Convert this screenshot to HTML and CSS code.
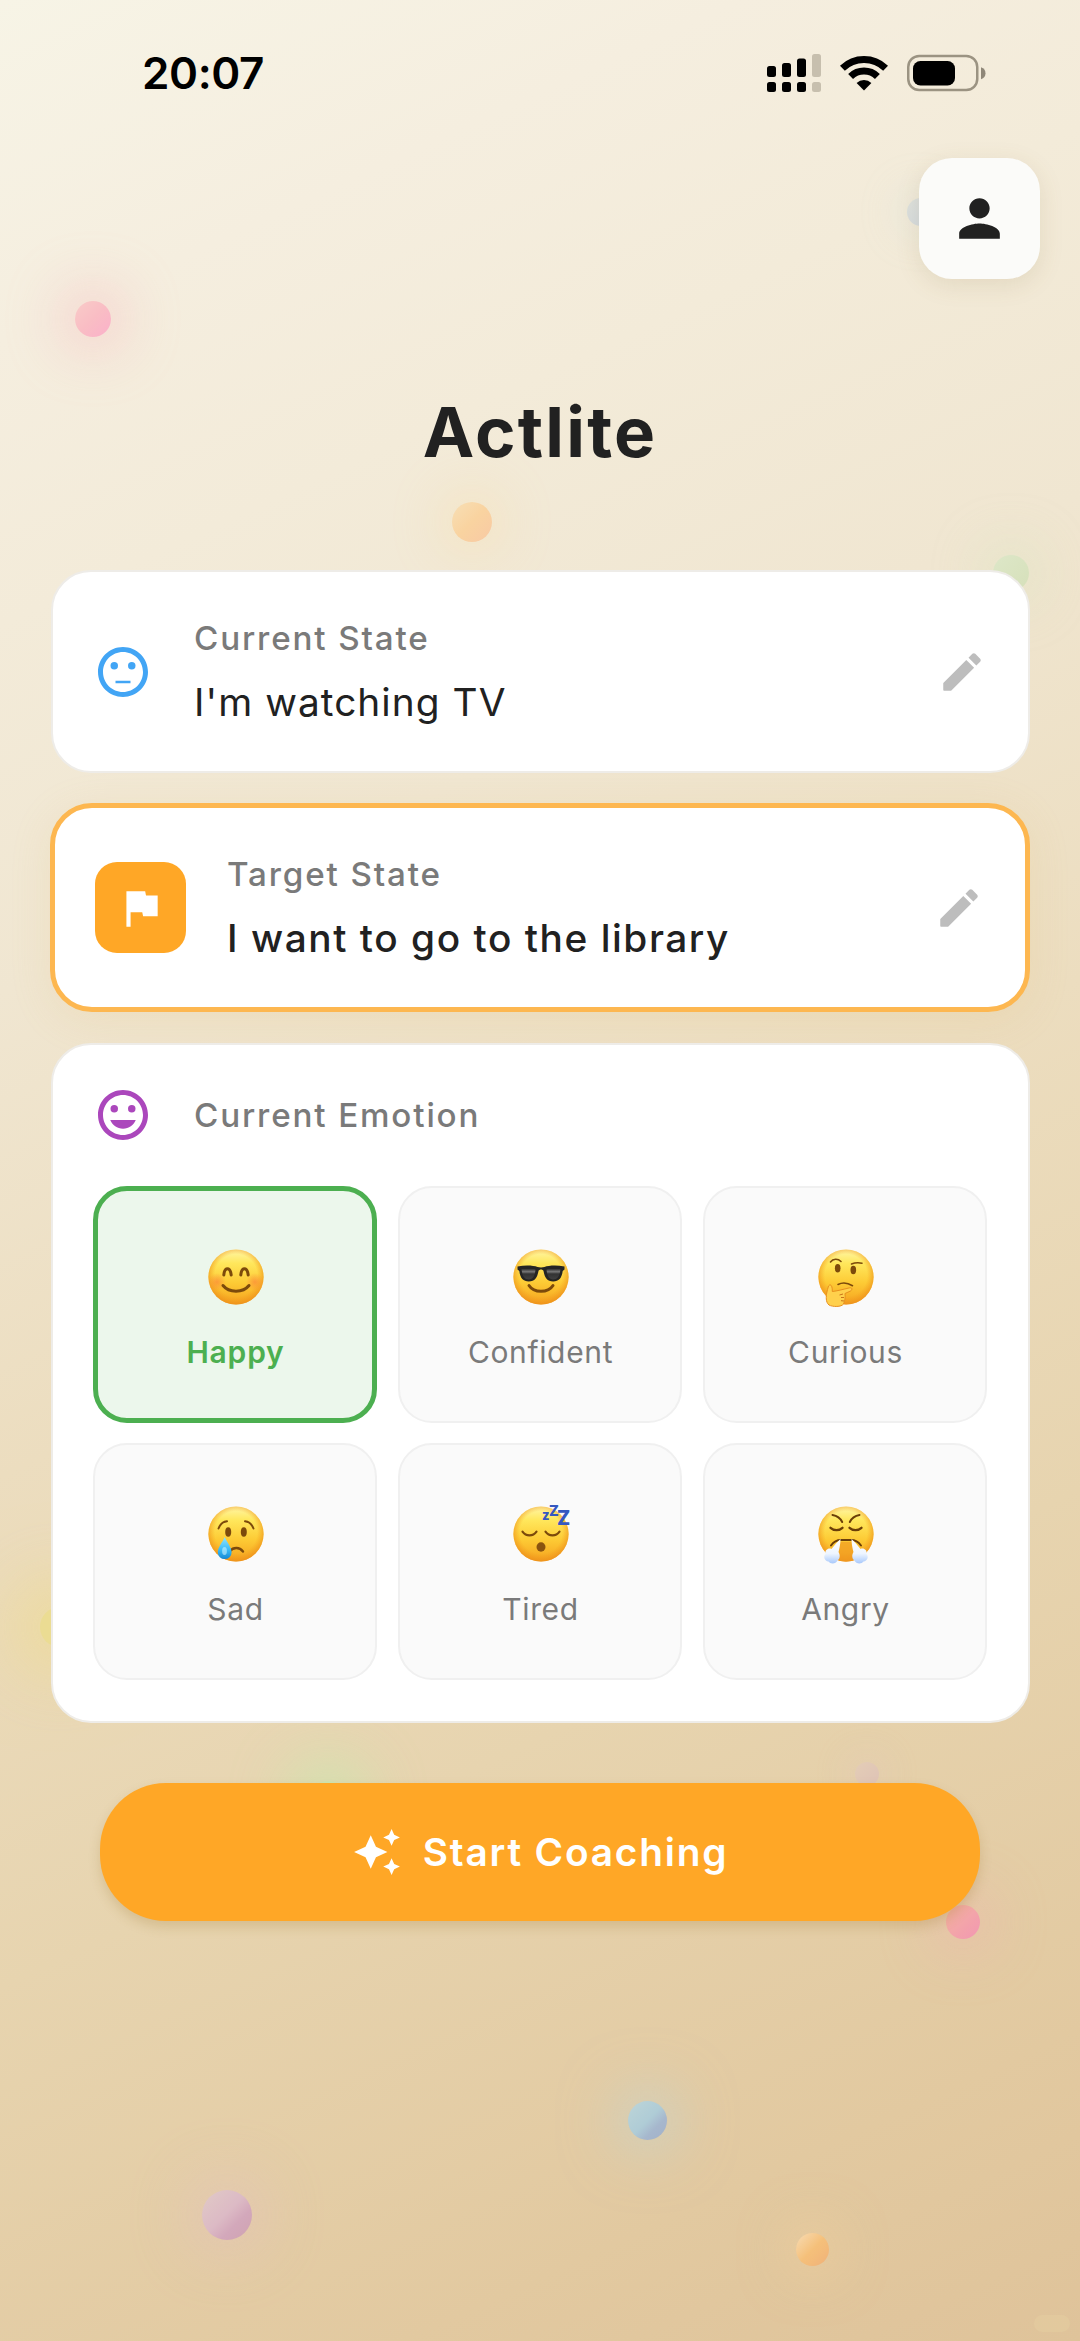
FILE: index.html
```html
<!DOCTYPE html>
<html lang="en">
<head>
<meta charset="utf-8">
<title>Actlite</title>
<link rel="stylesheet" href="styles.css">
</head>
<body>
<svg class="defs" aria-hidden="true">
  <defs>
    <linearGradient id="face-fill" x1="0" y1="0" x2="0" y2="1">
      <stop offset="0" stop-color="#fff6a8"/>
      <stop offset=".25" stop-color="#ffe75c"/>
      <stop offset=".6" stop-color="#fdcb35"/>
      <stop offset="1" stop-color="#f5a21f"/>
    </linearGradient>
    <radialGradient id="face-rim" cx=".5" cy=".47" r=".53">
      <stop offset=".72" stop-color="#f39a1d" stop-opacity="0"/>
      <stop offset="1" stop-color="#ec8d1a" stop-opacity=".75"/>
    </radialGradient>
    <radialGradient id="blush">
      <stop offset="0" stop-color="#fb7a3a" stop-opacity=".6"/>
      <stop offset="1" stop-color="#fb7a3a" stop-opacity="0"/>
    </radialGradient>
    <linearGradient id="tear" x1="0" y1="0" x2="0" y2="1">
      <stop offset="0" stop-color="#8fe4ff"/>
      <stop offset=".6" stop-color="#38b9f5"/>
      <stop offset="1" stop-color="#1587d3"/>
    </linearGradient>
    <linearGradient id="lens" x1="0" y1="0" x2="0" y2="1">
      <stop offset="0" stop-color="#222"/>
      <stop offset=".3" stop-color="#777"/>
      <stop offset=".5" stop-color="#333"/>
      <stop offset="1" stop-color="#3f3f3f"/>
    </linearGradient>
    <linearGradient id="puff" x1="0" y1="0" x2="0" y2="1">
      <stop offset="0" stop-color="#fff"/>
      <stop offset=".6" stop-color="#eef5ff"/>
      <stop offset="1" stop-color="#a9c9fb"/>
    </linearGradient>
    <symbol id="face" viewBox="-31 -31 62 62">
      <circle r="27.6" fill="url(#face-fill)"/>
      <circle r="27.6" fill="url(#face-rim)"/>
    </symbol>
    <symbol id="pencil" viewBox="0 0 24 24">
      <path d="M3 17.46v3.04c0 .28.22.5.5.5h3.04c.13 0 .26-.05.35-.15L17.81 9.94l-3.75-3.75L3.15 17.1c-.1.1-.15.22-.15.36zM20.71 7.04c.39-.39.39-1.02 0-1.41l-2.34-2.34c-.39-.39-1.02-.39-1.41 0l-1.83 1.83 3.75 3.75 1.83-1.83z"/>
    </symbol>
  </defs>
</svg>

<div class="screen">
  <div class="bubbles" aria-hidden="true">
    <i class="bubble pink-a"></i>
    <i class="bubble orange-a"></i>
    <i class="bubble blue-a"></i>
    <i class="bubble green-a"></i>
    <i class="bubble yellow-a"></i>
    <i class="bubble green-b"></i>
    <i class="bubble purple-a"></i>
    <i class="bubble pink-b"></i>
    <i class="bubble blue-b"></i>
    <i class="bubble purple-b"></i>
    <i class="bubble orange-b"></i>
    <i class="badge"></i>
  </div>

  <div class="status">
    <span class="time">20:07</span>
    <svg class="signal" viewBox="0 0 54 38">
      <g><rect x="0" y="12" width="9" height="11" rx="2.5"/><rect x="15" y="9" width="9" height="14" rx="2.5"/><rect x="30" y="4.500" width="9" height="18.500" rx="2.500"/>
      <rect x="0" y="28" width="9" height="10" rx="2.5"/><rect x="15" y="28" width="9" height="10" rx="2.5"/><rect x="30" y="28" width="9" height="10" rx="2.5"/></g>
      <g fill="#c7bfae"><rect x="45" y="0" width="9" height="23" rx="2.5"/><rect x="45" y="28" width="9" height="10" rx="2.5"/></g>
    </svg>
    <svg class="wifi" viewBox="0 0 48 36">
      <g fill="none" stroke="#000" stroke-width="7">
        <path d="M2.400 13.200A31 31 0 0 1 45.600 13.200"/>
        <path d="M10.600 21.400A19.200 19.200 0 0 1 37.400 21.400"/>
      </g>
      <path d="M24 35.500l-7.400-7.400a10.600 10.600 0 0 1 14.800 0z"/>
    </svg>
    <svg class="battery" viewBox="0 0 79 38">
      <rect x="1.250" y="2" width="69" height="34" rx="11" fill="none" stroke="#9b9382" stroke-width="2.500"/>
      <rect x="6" y="7" width="42" height="24.500" rx="7.500"/>
      <path d="M74 13.200c6 1.600 6 10.400 0 12z" fill="#8f8778"/>
    </svg>
  </div>

  <div class="toolbar">
    <button class="profile" aria-label="Profile">
      <svg viewBox="0 0 24 24"><path d="M12 12c2.210 0 4-1.790 4-4s-1.790-4-4-4-4 1.790-4 4 1.790 4 4 4zm0 2c-2.670 0-8 1.340-8 4v2h16v-2c0-2.660-5.330-4-8-4z"/></svg>
    </button>
  </div>

  <h1 class="title">Actlite</h1>

  <main class="cards">
    <section class="card state">
      <svg class="state-icon" viewBox="0 0 24 24" fill="#42a5f5"><path d="M9 15.500h6v1H9z"/><circle cx="15.500" cy="9.500" r="1.500"/><circle cx="8.500" cy="9.500" r="1.500"/><path d="M11.990 2C6.470 2 2 6.480 2 12s4.470 10 9.990 10C17.520 22 22 17.520 22 12S17.520 2 11.990 2zM12 20c-4.420 0-8-3.580-8-8s3.580-8 8-8 8 3.580 8 8-3.580 8-8 8z"/></svg>
      <div class="state-text">
        <div class="label">Current State</div>
        <div class="value">I'm watching TV</div>
      </div>
      <svg class="edit"><use href="#pencil"/></svg>
    </section>

    <section class="card state target">
      <div class="flag"><svg viewBox="0 0 24 24"><path d="M14.400 6L14 4H5v17h2v-7h5.600l.4 2h7V6z"/></svg></div>
      <div class="state-text">
        <div class="label">Target State</div>
        <div class="value">I want to go to the library</div>
      </div>
      <svg class="edit"><use href="#pencil"/></svg>
    </section>

    <section class="card emotions">
      <div class="emotions-head">
        <svg class="state-icon" viewBox="0 0 24 24" fill="#ab47bc"><path d="M11.990 2C6.470 2 2 6.480 2 12s4.470 10 9.990 10C17.520 22 22 17.520 22 12S17.520 2 11.990 2zM12 20c-4.420 0-8-3.580-8-8s3.580-8 8-8 8 3.580 8 8-3.580 8-8 8z"/><circle cx="15.500" cy="9.500" r="1.500"/><circle cx="8.500" cy="9.500" r="1.500"/><path d="M12 17.500c2.330 0 4.310-1.460 5.110-3.500H6.890c.8 2.040 2.780 3.500 5.110 3.500z"/></svg>
        <div class="label">Current Emotion</div>
      </div>
      <div class="grid">
        <div class="cell selected">
          <svg class="emoji" viewBox="-31 -31 62 62">
            <use href="#face" x="-31" y="-31" width="62" height="62"/>
            <circle cx="-19" cy="5" r="9" fill="url(#blush)"/><circle cx="19" cy="5" r="9" fill="url(#blush)"/>
            <g fill="none" stroke="#7c4a0b" stroke-width="3" stroke-linecap="round">
              <path d="M-12.200-2c.8-8.500 6.400-8.500 7.400 0M4.800-2c.8-8.500 6.400-8.500 7.400 0"/>
              <path d="M-13 8.500c6 7.500 20 7.500 26 0"/>
            </g>
          </svg>
          <span>Happy</span>
        </div>
        <div class="cell">
          <svg class="emoji" viewBox="-31 -31 62 62">
            <use href="#face" x="-31" y="-31" width="62" height="62"/>
            <path d="M-12 8.500c5 7.800 19 7.800 24 0" fill="none" stroke="#7c4a0b" stroke-width="3" stroke-linecap="round"/>
            <path d="M-23.500-10.500c8-1.500 16-1 20 .5 2 .6 5 .6 7 0 4-1.500 12-2 20-.5v3l-1.800 1.500c-.8 7-4 10.500-9.500 10.500-6 0-8.500-4-9.700-10.500-.7-2-4.300-2-5 0C-3.700.5-6.200 4.500-12.200 4.500c-5.500 0-8.700-3.500-9.500-10.500l-1.800-1.500z" fill="#242424"/>
            <path d="M-19.500-8c5-1 11-.8 14 .5-.5 6-2.500 10-6.700 10s-6.500-3-7.300-10.500zM19.500-8c-5-1-11-.8-14 .5.5 6 2.500 10 6.700 10s6.500-3 7.300-10.500z" fill="url(#lens)"/>
          </svg>
          <span>Confident</span>
        </div>
        <div class="cell">
          <svg class="emoji" viewBox="-31 -31 62 62">
            <use href="#face" x="-31" y="-31" width="62" height="62"/>
            <g fill="none" stroke="#7c4a0b" stroke-width="1.600" stroke-linecap="round">
              <path d="M-15.500-15c2.500-3.500 7.500-3.500 10.500-.5M5.500-13c3-1.200 7-1.500 10.500-.8"/>
              <path d="M-8 7.500c4-2 10-1.500 14.500 1.200"/>
            </g>
            <ellipse cx="-8.300" cy="-8.700" rx="2.800" ry="4.200" fill="#7c4a0b"/><ellipse cx="7.300" cy="-7" rx="2.800" ry="4.200" fill="#7c4a0b"/>
            <path d="M-17.500 9c2-2.500 4-.5 3.800 5.500 5-.5 10-2 17.500-3.700 3-.2 2.500 2.400.3 3.400L-1 16.500c.6 3.500-.2 8-1.500 10.500-2 3.200-11 3-14.500 1-3.700-3-2.700-9-2.300-12 .6-2.500 1-4.500 1.800-7z" fill="#ffd04c" stroke="#e8901e" stroke-width="1"/>
            <path d="M-3 17l-3.500 1M-2 20.500h-3M-2 24l-3-.3" stroke="#c9751a" stroke-width="1" fill="none"/>
          </svg>
          <span>Curious</span>
        </div>
        <div class="cell">
          <svg class="emoji" viewBox="-31 -31 62 62">
            <use href="#face" x="-31" y="-31" width="62" height="62"/>
            <g fill="none" stroke="#7c4a0b" stroke-width="2" stroke-linecap="round">
              <path d="M-17.500-5.500c1.500-4 4.500-6.800 8.500-7.200M17.500-5.500c-1.500-4-4.500-6.800-8.500-7.200"/>
              <path d="M-6 17c3.500-4 9.500-4 13 .5" stroke-width="2.400"/>
            </g>
            <ellipse cx="-7.800" cy="-2" rx="3" ry="4.700" fill="#7c4a0b"/><ellipse cx="7.800" cy="-2" rx="3" ry="4.700" fill="#7c4a0b"/>
            <path d="M-11.300 3C-13.500 8.500-18.200 13-18.200 18.500a6.900 6.600 0 0 0 13.800 0C-4.400 13-9 8.500-11.300 3z" fill="url(#tear)"/>
            <ellipse cx="-11.500" cy="17" rx="2.400" ry="4" fill="#d8f7ff" opacity=".55"/>
          </svg>
          <span>Sad</span>
        </div>
        <div class="cell">
          <svg class="emoji" viewBox="-31 -31 62 62">
            <use href="#face" x="-31" y="-31" width="62" height="62"/>
            <path d="M-18.500-2.300c3.500 5 10.500 5 14 0M4.500-2.300c3.500 5 10.500 5 14 0" fill="none" stroke="#7c4a0b" stroke-width="2.200" stroke-linecap="round"/>
            <ellipse cy="13" rx="4.500" ry="4.700" fill="#8a530f"/>
            <g class="snore"><text x="1" y="-14" font-size="13">z</text><text x="8" y="-18" font-size="14.500">Z</text><text x="16" y="-9.500" font-size="19.500">Z</text></g>
          </svg>
          <span>Tired</span>
        </div>
        <div class="cell">
          <svg class="emoji" viewBox="-31 -31 62 62">
            <use href="#face" x="-31" y="-31" width="62" height="62"/>
            <path d="M-7 8h14v18.500c-4 1.500-10 1.500-14 0z" fill="#f09a22" opacity=".6"/>
            <g fill="none" stroke="#6b3f08" stroke-width="2" stroke-linecap="round">
              <path d="M-13.500-19c4 .7 8 3.500 9.700 7M13.500-19c-4 .7-8 3.500-9.700 7"/>
              <path d="M-15.500-6.200c3.500 3.200 8.500 3.200 12 0M15.500-6.200c-3.500 3.200-8.500 3.200-12 0" stroke-width="2.300"/>
              <path d="M-15 11.500c2.500-3.500 6-5.500 10-5.500h10c4 0 7.500 2 10 5.500"/>
            </g>
            <g fill="url(#puff)">
              <path d="M-5.500 5c0 5-1.200 10-2 13 2 3 1.500 7-1 8.500-1.500 3.500-7 3.800-9 1-4-.5-5.500-5-3-7.500-1-4 3-6.500 6-5C-12 11.500-8.500 8-5.500 5z"/>
              <path d="M5.500 5c0 5 1.200 10 2 13-2 3-1.500 7 1 8.500 1.500 3.500 7 3.800 9 1 4-.5 5.500-5 3-7.500 1-4-3-6.500-6-5C12 11.500 8.500 8 5.500 5z"/>
            </g>
          </svg>
          <span>Angry</span>
        </div>
      </div>
    </section>
  </main>

  <button class="start">
    <svg viewBox="0 0 24 24"><path d="M19 9l1.250-2.750L23 5l-2.750-1.250L19 1l-1.250 2.750L15 5l2.750 1.250L19 9zm-7.500.5L9 4 6.500 9.500 1 12l5.500 2.500L9 20l2.500-5.500L17 12l-5.500-2.500zM19 15l-1.250 2.750L15 19l2.750 1.250L19 23l1.250-2.750L23 19l-2.750-1.250L19 15z"/></svg>
    <span>Start Coaching</span>
  </button>
</div>
</body>
</html>
```
FILE: styles.css
```css
* { box-sizing: border-box; }

body {
  margin: 0;
  font-family: Inter, "Liberation Sans", sans-serif;
  color: #212121;
}

svg { display: block; flex: none; }

button {
  border: 0;
  padding: 0;
  font: inherit;
}

.defs { position: absolute; width: 0; height: 0; }

.screen {
  position: relative;
  isolation: isolate;
  display: flex;
  flex-direction: column;
  width: 1080px;
  height: 2341px;
  overflow: hidden;
  background: linear-gradient(155.24deg, #f7f4e6 0%, #f5eedf 12%, #f3ebd9 22%, #f0e6d1 35%, #ecddbf 52%, #e7d4af 70%, #e2c9a0 89%, #dfc39a 100%);
}

/* Floating bubbles behind the content */
.bubbles { position: absolute; inset: 0; z-index: -1; }

.bubble {
  position: absolute;
  width: calc(var(--r) * 2);
  height: calc(var(--r) * 2);
  margin: calc(var(--r) * -1) 0 0 calc(var(--r) * -1);
  border-radius: 50%;
}

.pink-a { --r: 18px; left: 93px; top: 319px; background: linear-gradient(135deg, #f9cbc8, #f9bdc4 50%, #fbb0ca); box-shadow: 0 0 55px 14px rgba(250, 170, 180, .42); }
.orange-a { --r: 20px; left: 472px; top: 522px; background: linear-gradient(135deg, #f7dfb5, #f9d3a0 50%, #f8c9a4); box-shadow: 0 0 50px 12px rgba(255, 214, 140, .25); }
.blue-a { --r: 14px; left: 921px; top: 212px; background: linear-gradient(135deg, #dee1dc, #d0d7de); box-shadow: 0 0 40px 8px rgba(200, 222, 228, .25); }
.green-a { --r: 18px; left: 1011px; top: 573px; background: linear-gradient(135deg, #dde7c8, #d6e0ba); box-shadow: 0 0 50px 12px rgba(205, 230, 185, .35); }
.yellow-a { --r: 20px; left: 60px; top: 1627px; background: #ebdc93; box-shadow: 0 0 70px 26px rgba(240, 220, 130, .6); }
.green-b { --r: 20px; left: 328px; top: 1801px; background: #cfe5b0; box-shadow: 0 0 60px 20px rgba(198, 234, 175, .75); }
.purple-a { --r: 12px; left: 867px; top: 1774px; background: linear-gradient(135deg, #e4cdb6, #dec2b6); box-shadow: 0 0 34px 6px rgba(225, 195, 200, .3); }
.pink-b { --r: 17px; left: 962.5px; top: 1921.5px; background: linear-gradient(135deg, #f1b39c, #f3a5a9 50%, #f296b2); box-shadow: 0 0 55px 12px rgba(245, 170, 180, .42); }
.blue-b { --r: 19.5px; left: 647.5px; top: 2120.5px; background: linear-gradient(135deg, #bdd5d8, #afccd6 50%, #a6b7cd 70%, #a2b1c9); box-shadow: 0 0 55px 12px rgba(188, 212, 216, .6); }
.purple-b { --r: 25px; left: 226.5px; top: 2214.5px; background: linear-gradient(135deg, #e1cac6, #dcbac5 48%, #d3a8bb 68%, #cfa2b1); box-shadow: 0 0 60px 12px rgba(226, 188, 200, .45); }
.orange-b { --r: 16.5px; left: 812.5px; top: 2249.5px; background: linear-gradient(135deg, #f7dcb5, #f5c07a 50%, #f0b178); box-shadow: 0 0 46px 10px rgba(243, 208, 155, .55); }

.badge {
  position: absolute;
  right: 10px;
  bottom: 9px;
  width: 36px;
  height: 17px;
  border-radius: 9px;
  background: rgba(228, 205, 160, .6);
}

/* Status bar */
.status {
  display: flex;
  align-items: center;
  height: 145px;
  padding: 0 94px 0 142px;
}

.time {
  flex: 1;
  font-size: 44px;
  font-weight: 600;
  line-height: 50px;
  letter-spacing: -.4px;
  color: #000;
}

.signal { width: 54px; height: 38px; margin-right: 19.5px; }
.wifi { width: 48px; height: 36px; margin-right: 19px; }
.battery { width: 79px; height: 38px; }

.toolbar {
  display: flex;
  justify-content: flex-end;
  padding: 13px 40px 0 0;
}

.profile {
  display: grid;
  place-items: center;
  width: 121px;
  height: 121px;
  border-radius: 33px;
  background: #fbfbf9;
  box-shadow: 0 6px 24px rgba(120, 100, 50, .13);
}

.profile svg { width: 61px; height: 61px; fill: #212121; }

.title {
  margin: 107px 0 92px;
  font-size: 69px;
  font-weight: 680;
  line-height: 92px;
  letter-spacing: 2.2px;
  text-align: center;
}

/* Cards */
.cards {
  display: flex;
  flex-direction: column;
  gap: 31px;
  padding: 0 50px 0 51px;
}

.card {
  border: 2px solid #eeece8;
  border-radius: 40px;
  background: #fff;
}

.state {
  display: flex;
  align-items: center;
  height: 203px;
  padding: 0 41px 0 40px;
}

.state-icon { width: 60px; height: 60px; margin-right: 41px; }

.state-text { flex: 1; }

.label {
  font-size: 33.2px;
  font-weight: 500;
  line-height: 60px;
  letter-spacing: 1.85px;
  color: #7a7a7a;
}

.value {
  font-size: 38.8px;
  line-height: 67px;
  letter-spacing: 1.05px;
}

.edit { width: 50px; height: 50px; fill: #bdbdbd; }

.target {
  height: 209px;
  margin: -1px 0 0 -1px;
  padding: 0 41px 0 40px;
  border: 5px solid #fdb750;
  border-radius: 42px;
  box-shadow: 0 8px 40px rgba(225, 185, 110, .16);
}

.target .state-text { padding-bottom: 1px; }

.target .value { font-weight: 500; letter-spacing: 1.55px; }

.flag {
  display: grid;
  place-items: center;
  width: 91px;
  height: 91px;
  margin-right: 41px;
  border-radius: 22px;
  background: #ffa726;
}

.flag svg { width: 50px; height: 50px; fill: #fff; }

.emotions { padding: 40px 41px 41px 40px; }

.emotions-head { display: flex; align-items: center; margin-bottom: 41px; }

.grid {
  display: grid;
  grid-template-columns: repeat(3, 1fr);
  grid-auto-rows: 237px;
  gap: 20px 21px;
}

.cell {
  display: flex;
  flex-direction: column;
  align-items: center;
  justify-content: center;
  gap: 24px;
  padding: 9px 0 0 1px;
  border: 2px solid #f0f0f0;
  border-radius: 34px;
  background: #fafafa;
  font-size: 30px;
  line-height: 40px;
  letter-spacing: .65px;
  color: #7a7a7a;
}

.cell.selected {
  border: 5px solid #4caf50;
  background: #ecf7ec;
  font-weight: 600;
  letter-spacing: .8px;
  color: #4caf50;
}

.emoji { width: 62px; height: 62px; overflow: visible; }

.snore {
  font-family: Inter, sans-serif;
  font-weight: 800;
  letter-spacing: 0;
  fill: #3558c0;
}

.start {
  display: flex;
  align-items: center;
  justify-content: center;
  gap: 21px;
  height: 138px;
  margin: 60px 100px 0;
  border-radius: 66px;
  background: #ffa726;
  box-shadow: 0 6px 12px rgba(150, 110, 30, .22);
  font-size: 38.8px;
  font-weight: 620;
  line-height: 50px;
  letter-spacing: 1.8px;
  color: #fff;
}

.start svg { width: 50px; height: 50px; fill: #fff; }
```
